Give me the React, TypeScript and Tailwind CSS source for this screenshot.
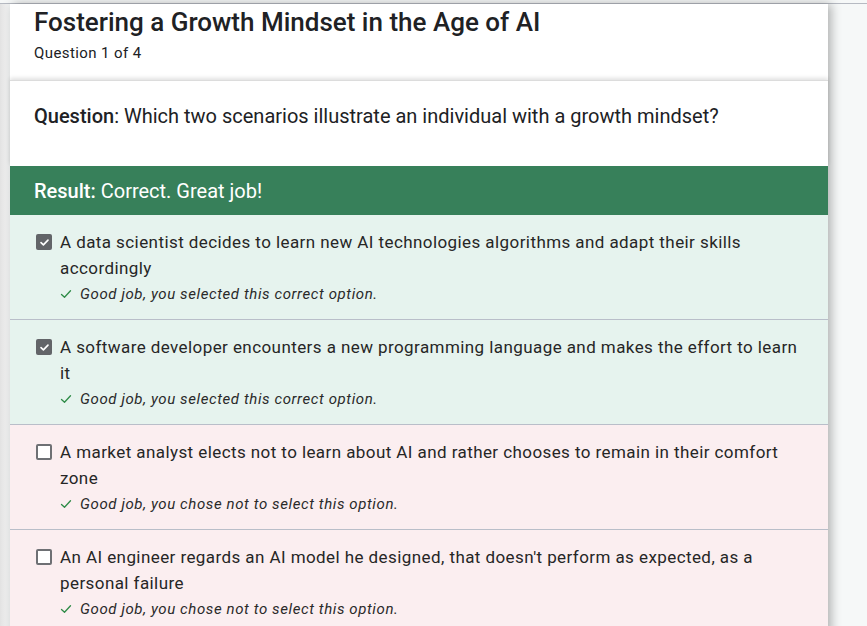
import React from 'react';

type Option = {
  text: string;
  checked: boolean;
  correct: boolean;
  feedback: string;
};

const options: Option[] = [
  {
    text: 'A data scientist decides to learn new AI technologies algorithms and adapt their skills accordingly',
    checked: true,
    correct: true,
    feedback: 'Good job, you selected this correct option.',
  },
  {
    text: 'A software developer encounters a new programming language and makes the effort to learn it',
    checked: true,
    correct: true,
    feedback: 'Good job, you selected this correct option.',
  },
  {
    text: 'A market analyst elects not to learn about AI and rather chooses to remain in their comfort zone',
    checked: false,
    correct: false,
    feedback: 'Good job, you chose not to select this option.',
  },
  {
    text: "An AI engineer regards an AI model he designed, that doesn't perform as expected, as a personal failure",
    checked: false,
    correct: false,
    feedback: 'Good job, you chose not to select this option.',
  },
];

const Box: React.FC<{ checked: boolean }> = ({ checked }) =>
  checked ? (
    <span className="mt-[5px] flex h-4 w-4 shrink-0 items-center justify-center rounded-[2px] bg-[#626468]">
      <svg width="11" height="11" viewBox="0 0 12 12" fill="none">
        <path d="M2.2 6.2 4.8 8.6 9.8 3.4" stroke="#fff" strokeWidth="1.8" strokeLinecap="round" strokeLinejoin="round" />
      </svg>
    </span>
  ) : (
    <span className="mt-[5px] h-4 w-4 shrink-0 rounded-[2px] border-2 border-[#6e7074] bg-white" />
  );

const Tick = () => (
  <svg width="12" height="12" viewBox="0 0 12 12" fill="none" className="shrink-0">
    <path d="M1.5 6.5 4.5 9.3 10.5 2.8" stroke="#2e8b47" strokeWidth="1.3" strokeLinecap="round" strokeLinejoin="round" />
  </svg>
);

export default function App() {
  return (
    <div
      className="h-[626px] w-[867px] overflow-hidden bg-[#f6f8f8] pt-[3px] text-[#202124]"
      style={{ fontFamily: 'Roboto, "Noto Sans", Arial, sans-serif' }}
    >
      <div className="h-full border-t border-[#b6bac2] bg-gradient-to-r from-[#e2e2e2] via-[#eeeeee] to-[#f6f8f8] bg-[length:10px_100%] bg-no-repeat">
        <div className="ml-[10px] w-[818px] shadow-[3px_0_10px_rgba(0,0,0,0.3)]">
          {/* header */}
          <div className="h-[76px] bg-white px-6 pt-[2px]">
            <h1 className="text-[26px] font-medium leading-[32px]">
              Fostering a Growth Mindset in the Age of AI
            </h1>
            <p className="mt-[5px] text-[15px] leading-[20px] tracking-[0.4px]">Question 1 of 4</p>
          </div>

          {/* question */}
          <div className="h-[86px] border-t border-[#dcdcdc] bg-white px-6 pt-[21px] shadow-[0_-2px_4px_rgba(0,0,0,0.12)]">
            <p className="text-[20px] leading-[28px]">
              <span className="font-medium">Question</span>: Which two scenarios illustrate an individual with a growth mindset?
            </p>
          </div>

          {/* result */}
          <div className="flex h-[49px] items-center bg-[#37805a] px-6 text-[20px] text-white">
            <span className="font-medium">Result:</span>&nbsp;Correct. Great job!
          </div>

          {/* options */}
          {options.map((o, i) => (
            <div
              key={i}
              className={`flex gap-2 border-b border-[#b9bec9] pb-[12px] pl-[26px] pr-[18px] pt-[14px] ${
                o.correct ? 'bg-[#e6f3ee]' : 'bg-[#fbeef0]'
              }`}
            >
              <Box checked={o.checked} />
              <div className="flex-1">
                <p className="text-[17px] leading-[26px] tracking-[0.42px] text-[#262626]">{o.text}</p>
                <div className="flex items-center gap-2 text-[15px] leading-[26px] tracking-[0.6px]">
                  <Tick />
                  <span className="italic text-[#2a2a2a]">{o.feedback}</span>
                </div>
              </div>
            </div>
          ))}
        </div>
      </div>
    </div>
  );
}
